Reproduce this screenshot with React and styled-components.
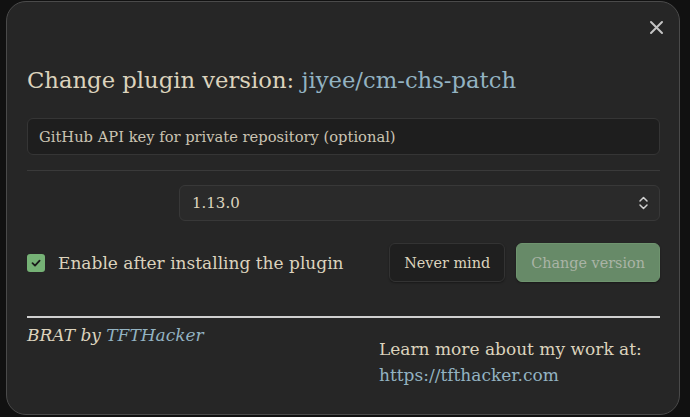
import React from "react";
import styled, { createGlobalStyle } from "styled-components";

const GlobalStyle = createGlobalStyle`
  html, body {
    margin: 0;
    padding: 0;
    background: #111111;
    font-family: "DejaVu Serif", "Liberation Serif", serif;
    color: #dcd3bd;
  }
`;

const Backdrop = styled.div`
  width: 690px;
  height: 417px;
  overflow: hidden;
  padding: 1px 0 0 6px;
  box-sizing: border-box;
`;

const Modal = styled.div`
  position: relative;
  width: 674px;
  height: 414px;
  box-sizing: border-box;
  background: #262626;
  border: 1px solid #4a4a4a;
  border-radius: 20px;
  padding: 58px 19px 0 20px;
`;

const CloseButton = styled.button`
  position: absolute;
  top: 14px;
  right: 12px;
  width: 22px;
  height: 22px;
  padding: 0;
  border: none;
  background: transparent;
  display: flex;
  align-items: center;
  justify-content: center;
  color: #c4c4c4;
`;

const Title = styled.h2`
  margin: 0;
  font-size: 22.7px;
  font-weight: 400;
  line-height: 40px;
  color: #dcd3bd;
`;

const Link = styled.span`
  color: #93b3c2;
`;

const TextInput = styled.input`
  display: block;
  box-sizing: border-box;
  width: 100%;
  height: 37px;
  margin-top: 18px;
  padding: 0 11px;
  background: #1e1e1e;
  border: 1px solid #353535;
  border-radius: 6px;
  font-family: inherit;
  font-size: 14.7px;
  color: #dcd3bd;
  outline: none;
  &::placeholder {
    color: #cbc4b3;
  }
`;

const Divider = styled.hr`
  margin: 15px 0 0;
  border: none;
  border-top: ${(p) => p.thick || "1px"} solid ${(p) => p.color || "#3a3a3a"};
`;

const FooterRule = styled(Divider)`
  margin-top: 34px;
`;

const SelectRow = styled.div`
  display: flex;
  justify-content: flex-end;
  margin-top: 14px;
`;

const Select = styled.div`
  box-sizing: border-box;
  width: 481px;
  height: 36px;
  display: flex;
  align-items: center;
  justify-content: space-between;
  padding: 0 10px 0 12px;
  background: #2a2a2a;
  border: 1px solid #383838;
  border-radius: 6px;
  font-size: 15px;
  color: #dcd3bd;
`;

const ActionRow = styled.div`
  display: flex;
  align-items: center;
  margin-top: 22px;
  height: 39px;
`;

const CheckLabel = styled.label`
  display: flex;
  align-items: center;
  gap: 13px;
  font-size: 17px;
  color: #dcd3bd;
  flex: 1;
`;

const CheckBox = styled.span`
  width: 18px;
  height: 18px;
  border-radius: 3px;
  background: #76b276;
  display: flex;
  align-items: center;
  justify-content: center;
`;

const Button = styled.button`
  box-sizing: border-box;
  height: 39px;
  padding: 0 14px;
  margin-left: ${(p) => (p.primary ? "11px" : "0")};
  border-radius: 6px;
  border: 1px solid ${(p) => (p.primary ? "#6f946f" : "#333333")};
  background: ${(p) => (p.primary ? "#678a68" : "#1f1f1f")};
  color: ${(p) => (p.primary ? "#aab4a6" : "#dcd3bd")};
  font-family: inherit;
  font-size: 14.4px;
  box-shadow: 0 1px 2px rgba(0, 0, 0, 0.35);
`;

const Footer = styled.div`
  display: flex;
  justify-content: space-between;
  margin-top: 4px;
`;

const Credit = styled.div`
  font-style: italic;
  font-size: 17px;
  line-height: 26px;
  color: #dcd3bd;
`;

const MoreInfo = styled.div`
  width: 281px;
  margin-top: 14px;
  font-size: 17px;
  line-height: 26px;
  color: #dcd3bd;
`;

const ChevronIcon = () => (
  <svg width="11" height="16" viewBox="0 0 11 16" fill="none" stroke="#d0d0d0" strokeWidth="1.5" strokeLinecap="round" strokeLinejoin="round">
    <path d="M2 6 L5.5 2.5 L9 6" />
    <path d="M2 10 L5.5 13.5 L9 10" />
  </svg>
);

export default function App() {
  return (
    <>
      <GlobalStyle />
      <Backdrop>
        <Modal>
          <CloseButton aria-label="Close">
            <svg width="15" height="15" viewBox="0 0 15 15" stroke="currentColor" strokeWidth="2" strokeLinecap="round">
              <path d="M2 2 L13 13 M13 2 L2 13" />
            </svg>
          </CloseButton>
          <Title>
            Change plugin version: <Link>jiyee/cm-chs-patch</Link>
          </Title>
          <TextInput placeholder="GitHub API key for private repository (optional)" />
          <Divider />
          <SelectRow>
            <Select>
              <span>1.13.0</span>
              <ChevronIcon />
            </Select>
          </SelectRow>
          <ActionRow>
            <CheckLabel>
              <CheckBox>
                <svg width="12" height="12" viewBox="0 0 12 12" fill="none" stroke="#1b1b1b" strokeWidth="1.8" strokeLinecap="round" strokeLinejoin="round">
                  <path d="M2.5 6.2 L5 8.6 L9.6 3.6" />
                </svg>
              </CheckBox>
              Enable after installing the plugin
            </CheckLabel>
            <Button>Never mind</Button>
            <Button primary>Change version</Button>
          </ActionRow>
          <FooterRule color="#cfcfcf" thick="2px" />
          <Footer>
            <Credit>
              BRAT by <Link>TFTHacker</Link>
            </Credit>
            <MoreInfo>
              Learn more about my work at:
              <br />
              <Link>https://tfthacker.com</Link>
            </MoreInfo>
          </Footer>
        </Modal>
      </Backdrop>
    </>
  );
}
